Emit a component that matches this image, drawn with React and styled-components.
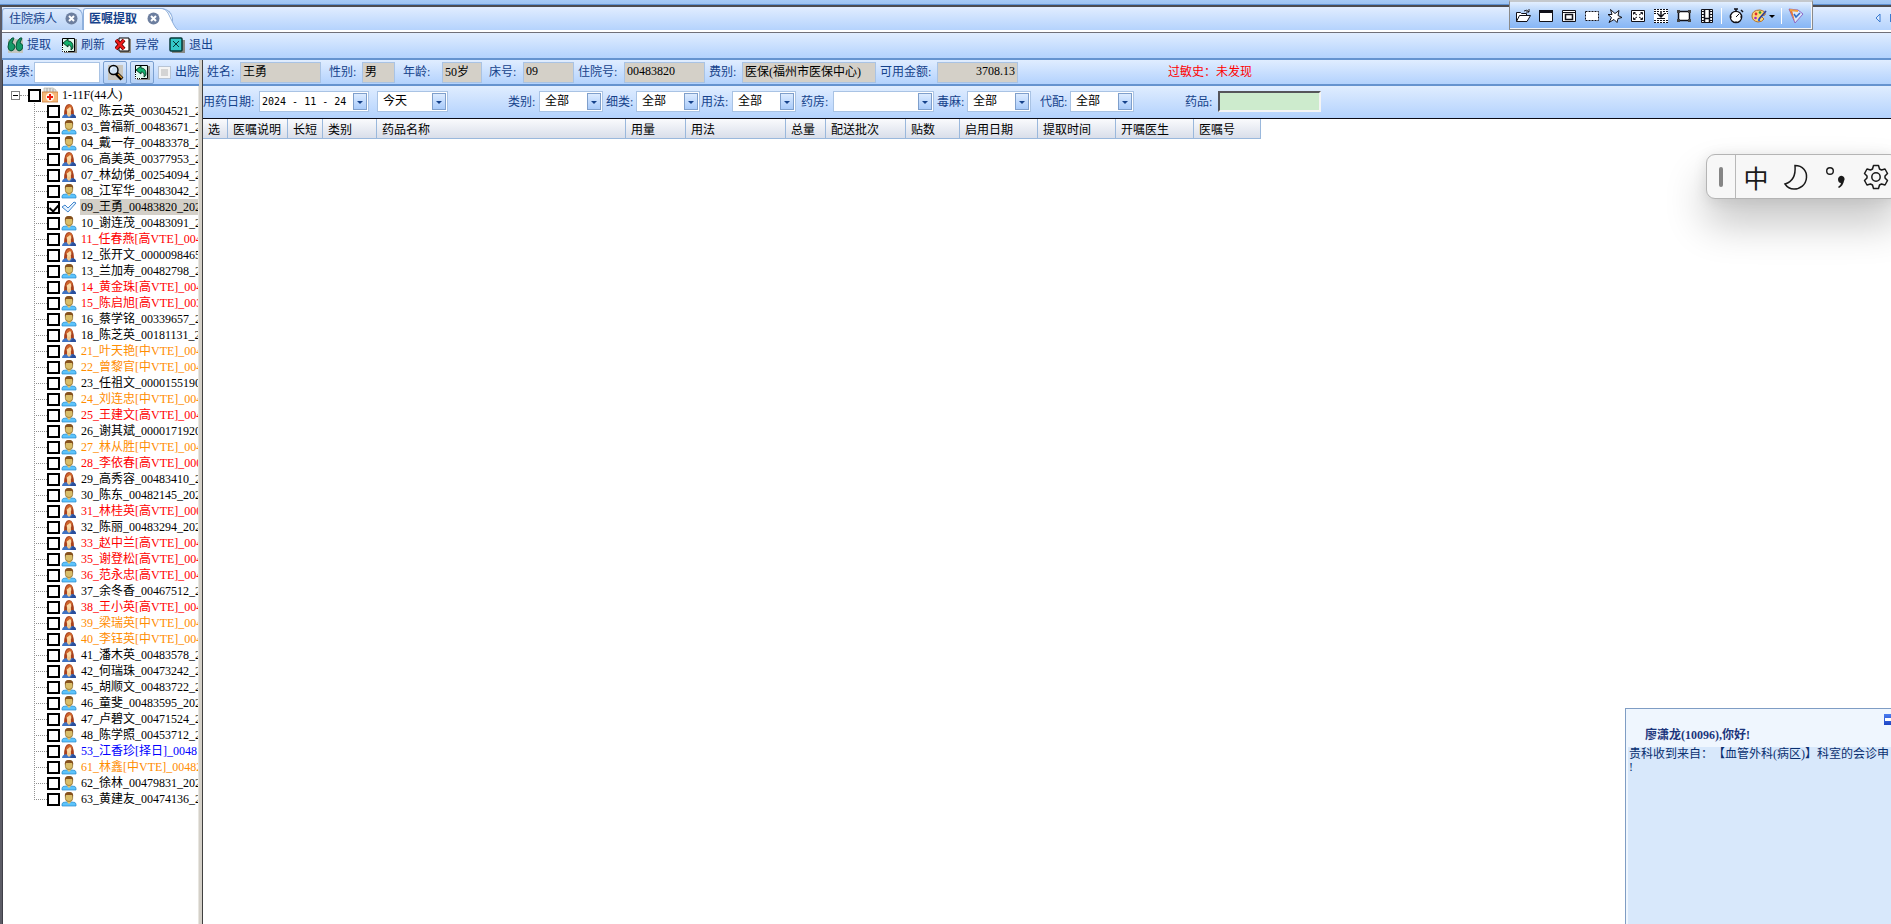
import React from "react";
import styled, { createGlobalStyle } from "styled-components";

const GlobalStyle = createGlobalStyle`
  * {
    box-sizing: border-box;
  }

  body {
    margin: 0;
    overflow: hidden;
    background: #ffffff;
    font-family: "Liberation Serif", "Noto Sans CJK SC", sans-serif;
    font-size: 12px;
    line-height: 16px;
    text-spacing-trim: space-all;
    color: #000000;
  }

  button, input, select {
    margin: 0;
    padding: 0;
    font: inherit;
    color: inherit;
  }
`;

const navy = "#15428b";
const edge = "#6593cf";
const soft = "#a9c3e4";
const barFill = "linear-gradient(#e0edff, #b3d2fd)";

const patients = [
  ["02_陈云英_00304521_2", "f"],
  ["03_曾福新_00483671_2", "m"],
  ["04_戴一存_00483378_2", "m"],
  ["06_高美英_00377953_2", "f"],
  ["07_林幼俤_00254094_2", "f"],
  ["08_江军华_00483042_2", "m"],
  ["09_王勇_00483820_202", "ok"],
  ["10_谢连茂_00483091_2", "m"],
  ["11_任春燕[高VTE]_004", "f", "high"],
  ["12_张开文_0000098465", "f"],
  ["13_兰加寿_00482798_2", "m"],
  ["14_黄金珠[高VTE]_004", "f", "high"],
  ["15_陈启旭[高VTE]_003", "m", "high"],
  ["16_蔡学铭_00339657_2", "m"],
  ["18_陈芝英_00181131_2", "f"],
  ["21_叶天艳[中VTE]_004", "f", "mid"],
  ["22_曾黎官[中VTE]_004", "m", "mid"],
  ["23_任祖文_0000155190", "m"],
  ["24_刘连忠[中VTE]_004", "m", "mid"],
  ["25_王建文[高VTE]_004", "m", "high"],
  ["26_谢其斌_0000171920", "m"],
  ["27_林从胜[中VTE]_004", "m", "mid"],
  ["28_李依春[高VTE]_000", "m", "high"],
  ["29_高秀容_00483410_2", "f"],
  ["30_陈东_00482145_202", "m"],
  ["31_林桂英[高VTE]_000", "f", "high"],
  ["32_陈丽_00483294_202", "f"],
  ["33_赵中兰[高VTE]_004", "f", "high"],
  ["35_谢登松[高VTE]_004", "m", "high"],
  ["36_范永忠[高VTE]_004", "m", "high"],
  ["37_余冬香_00467512_2", "f"],
  ["38_王小英[高VTE]_004", "f", "high"],
  ["39_梁瑞英[中VTE]_004", "f", "mid"],
  ["40_李钰英[中VTE]_004", "f", "mid"],
  ["41_潘木英_00483578_2", "f"],
  ["42_何瑞珠_00473242_2", "f"],
  ["45_胡顺文_00483722_2", "m"],
  ["46_童斐_00483595_202", "m"],
  ["47_卢碧文_00471524_2", "f"],
  ["48_陈学照_00453712_2", "m"],
  ["53_江香珍[择日]_0048", "f", "plan"],
  ["61_林鑫[中VTE]_00482", "m", "mid"],
  ["62_徐林_00479831_202", "m"],
  ["63_黄建友_00474136_2", "m"],
];

const levelColors = { high: "#ff0000", mid: "#ff8c00", plan: "#0000ff" };

const columns = [
  ["选", 25],
  ["医嘱说明", 60],
  ["长短", 35],
  ["类别", 54],
  ["药品名称", 249],
  ["用量", 60],
  ["用法", 100],
  ["总量", 40],
  ["配送批次", 80],
  ["贴数", 54],
  ["启用日期", 78],
  ["提取时间", 78],
  ["开嘱医生", 78],
  ["医嘱号", 67],
];

// label, value, label width, field width, gap before
const infoFields = [
  ["姓名:", "王勇", 33, 81, 4],
  ["性别:", "男", 33, 33, 8],
  ["年龄:", "50岁", 39, 40, 8],
  ["床号:", "09", 34, 51, 7],
  ["住院号:", "00483820", 46, 81, 4],
  ["费别:", "医保(福州市医保中心)", 33, 134, 4],
  ["可用金额:", "3708.13", 57, 81, 4],
];

const filters = [
  ["类别:", "全部", 31, 64, 60],
  ["细类:", "全部", 30, 64, 3],
  ["用法:", "全部", 31, 64, 1],
  ["药房:", "", 32, 101, 5],
  ["毒麻:", "全部", 30, 64, 3],
  ["代配:", "全部", 30, 64, 9],
];

/* ---------- shell ---------- */

const Shell = styled.div`
  display: flex;
  flex-direction: column;
  height: 100vh;
  overflow: hidden;
`;

const TopEdge = styled.div`
  flex: none;
  height: 7px;
  background: linear-gradient(#a5c9f5, #9cc2f0);
  border-bottom: 2px solid #4c4c50;
  box-shadow: inset 0 -1px 0 #5f92d2;
`;

const Frame = styled.div`
  flex: 1;
  min-height: 0;
  display: flex;
  flex-direction: column;
  border-left: 2px solid #5c5c66;
`;

const TabBar = styled.nav`
  flex: none;
  display: flex;
  align-items: flex-end;
  height: 25px;
  background: linear-gradient(#e1edff, #b5d3fd);
  border-bottom: 2px solid #ffffff;
`;

const Tab = styled.div`
  display: flex;
  align-items: center;
  height: 22px;
  width: ${(p) => (p.$active ? 90 : 81)}px;
  padding: 0 0 2px ${(p) => (p.$active ? 5 : 6)}px;
  color: ${navy};
  font-weight: ${(p) => (p.$active ? 700 : 400)};
  background: ${(p) => (p.$active ? "#ffffff" : "linear-gradient(#deebfd, #b9d3f6)")};
  border: 1px solid #8fb0dc;
  border-bottom: 0;
  border-radius: 3px ${(p) => (p.$active ? "12px 0" : "8px 0")} 0;
`;

const TabText = styled.button`
  flex: none;
  width: ${(p) => (p.$active ? 58 : 56)}px;
  border: 0;
  background: none;
  text-align: left;
  white-space: nowrap;
`;

const CloseButton = styled.button`
  display: flex;
  width: 13px;
  height: 13px;
  border: 0;
  background: none;
`;

const TabSlope = styled.svg`
  flex: none;
  width: 16px;
  height: 22px;
  margin-left: -11px;
`;

const TabArrow = styled.svg`
  width: 16px;
  height: 12px;
  margin: 0 0 6px auto;
`;

const Toolbar = styled.div`
  flex: none;
  display: flex;
  align-items: center;
  gap: 10px;
  height: 28px;
  padding: 0 0 2px 5px;
  background: ${barFill};
  border-top: 1px solid #707078;
  border-bottom: 2px solid ${edge};
`;

const ToolButton = styled.button`
  display: flex;
  align-items: center;
  gap: 4px;
  height: 20px;
  border: 0;
  background: none;
  color: ${navy};
`;

const Body = styled.div`
  flex: 1;
  min-height: 0;
  display: flex;
`;

/* ---------- patient tree ---------- */

const Side = styled.aside`
  flex: none;
  display: flex;
  flex-direction: column;
  width: 197px;
  overflow: hidden;
  border-left: 1px solid #3f3f48;
`;

const Splitter = styled.div`
  flex: none;
  width: 4px;
  background: #d4d0c8;
  border-right: 1px solid #404040;
`;

const SearchRow = styled.form`
  flex: none;
  display: flex;
  align-items: center;
  height: 26px;
  padding-left: 3px;
  white-space: nowrap;
  color: ${navy};
  background: ${barFill};
  border-bottom: 2px solid ${edge};
`;

const SearchLabel = styled.label`
  flex: none;
  width: 28px;
`;

const SearchInput = styled.input`
  flex: none;
  width: 66px;
  height: 21px;
  margin-right: 3px;
  padding: 0 3px;
  border: 1px solid ${soft};
  background: #ffffff;
`;

const IconButton = styled.button`
  flex: none;
  display: flex;
  align-items: center;
  justify-content: center;
  width: 24px;
  height: 23px;
  margin-right: 3px;
  border: 1px solid #7a9fd0;
  border-radius: 2px;
  background: linear-gradient(#d9e8fc, #b4d0f5);
`;

const OutCheck = styled.input`
  flex: none;
  appearance: none;
  width: 13px;
  height: 13px;
  margin: 0 4px 0 1px;
  border: 1px solid #b8c4d4;
  background: #d4d4d4;
  box-shadow: inset 0 0 0 2px #f4f4f4;
`;

const Tree = styled.ul`
  flex: 1;
  min-height: 0;
  margin: 0;
  padding: 1px 0 0;
  list-style: none;
  overflow: hidden;
  background: #ffffff;
  border-right: 1px solid #e8e6e0;
`;

const RootRow = styled.div`
  display: flex;
  align-items: center;
  height: 16px;
  padding-left: 8px;
`;

const Expander = styled.button`
  display: flex;
  align-items: center;
  justify-content: center;
  width: 9px;
  height: 9px;
  border: 1px solid #808080;
  background: #ffffff;

  &::before {
    content: "";
    width: 5px;
    height: 1px;
    background: #000000;
  }
`;

const Dots = styled.span`
  flex: none;
  width: ${(p) => p.$width}px;
  border-top: 1px dotted #909090;
`;

const Branch = styled.ul`
  margin: 0;
  padding: 0 0 0 31px;
  list-style: none;
`;

const Row = styled.li`
  display: flex;
  align-items: center;
  height: 16px;
  background: linear-gradient(#909090 50%, transparent 50%) 0 0 / 1px 2px repeat-y;

  &:last-child {
    background-repeat: no-repeat;
    background-image: repeating-linear-gradient(#909090 0 1px, transparent 1px 2px);
    background-size: 1px 8px;
  }
`;

const RowLabel = styled.label`
  display: flex;
  flex: 1;
  align-items: center;
  min-width: 0;
`;

const TreeCheck = styled.input`
  flex: none;
  appearance: none;
  display: grid;
  place-items: center;
  width: 13px;
  height: 13px;
  border: 2px solid #000000;
  background: #ffffff;

  &:checked::before {
    content: "";
    width: 4px;
    height: 7px;
    margin-bottom: 2px;
    border: solid #000000;
    border-width: 0 2px 2px 0;
    transform: rotate(42deg);
  }
`;

const PatientIcon = styled.svg`
  flex: none;
  width: 16px;
  height: 16px;
  margin: 0 3px 0 1px;
`;

const Name = styled.span`
  flex: 1;
  padding-left: 1px;
  height: 16px;
  white-space: nowrap;
  overflow: hidden;
  color: ${(p) => levelColors[p.$level] || "#000000"};
  background: ${(p) => (p.$selected ? "#d4d0c8" : "transparent")};
`;

/* ---------- right side ---------- */

const Main = styled.main`
  flex: 1;
  min-width: 0;
  background: #ffffff;
`;

const InfoBar = styled.div`
  display: flex;
  align-items: center;
  height: 26px;
  color: ${navy};
  background: ${barFill};
  border-bottom: 2px solid ${edge};
`;

const FilterBar = styled(InfoBar)`
  height: 33px;
  padding-bottom: 1px;
  border-bottom: 1px solid #0a0a14;
`;

const Pair = styled.div`
  flex: none;
  display: flex;
  align-items: center;
  margin-left: ${(p) => p.$gap}px;
`;

const PairLabel = styled.label`
  flex: none;
  width: ${(p) => p.$width}px;
  white-space: nowrap;
`;

const ReadField = styled.input`
  width: ${(p) => p.$width}px;
  height: 21px;
  padding: 0 2px 2px;
  text-align: ${(p) => (p.$right ? "right" : "left")};
  color: #000000;
  border: 1px solid ${soft};
  background: #d4d0c8;
`;

const Allergy = styled.span`
  margin-left: 150px;
  color: #ff0000;
`;

const Combo = styled.div`
  display: flex;
  align-items: center;
  width: ${(p) => p.$width}px;
  height: 21px;
  padding: 1px;
  color: #000000;
  border: 1px solid ${soft};
  background: #ffffff;
`;

const Select = styled.select`
  appearance: none;
  flex: 1;
  min-width: 0;
  height: 17px;
  padding: 0 0 1px 4px;
  border: 0;
  background: none;
`;

const DateInput = styled.input`
  flex: 1;
  min-width: 0;
  height: 17px;
  padding: 0 0 1px 1px;
  border: 0;
  background: none;
  font-family: "DejaVu Sans Mono", monospace;
  font-size: 10px;
`;

const Arrow = styled.span`
  flex: none;
  display: flex;
  align-items: center;
  justify-content: center;
  width: 14px;
  height: 17px;
  border: 1px solid #7f9fcb;
  background: linear-gradient(#dcebff, #a9cbfa);
  pointer-events: none;

  &::before {
    content: "";
    margin-top: 2px;
    border: solid transparent;
    border-width: 3px 3px 0;
    border-top-color: ${navy};
  }
`;

const DrugInput = styled.input`
  width: 103px;
  height: 21px;
  padding: 0 3px;
  border: 2px solid #ffffff;
  border-color: #55555a #f4f4f4 #f4f4f4 #55555a;
  background: #cdebcd;
`;

const Table = styled.table`
  table-layout: fixed;
  width: 1058px;
  border-collapse: separate;
  border-spacing: 0;
`;

const Th = styled.th`
  height: 20px;
  padding: 2px 0 0 5px;
  text-align: left;
  font-weight: 400;
  white-space: nowrap;
  background: linear-gradient(#fafbfd, #d9deea);
  border-right: 1px solid #9ab8dc;
  border-bottom: 1px solid #9ab8dc;
`;

/* ---------- floating windows ---------- */

const CaptureBar = styled.div`
  position: absolute;
  top: 0;
  right: 78px;
  display: flex;
  align-items: center;
  gap: 7px;
  height: 30px;
  padding: 0 8px 0 5px;
  border: 1px solid #8a8a8a;
  border-top: 2px solid #c4c8cc;
  background: linear-gradient(#e3efff, #a6caf8 50%, #84b4f5);
  box-shadow: inset 0 -1px 0 #f5f5f5, inset -1px 0 0 #f5f5f5;
`;

const CaptureButton = styled.button`
  display: flex;
  align-items: center;
  width: ${(p) => (p.$wide ? 24 : 16)}px;
  height: 16px;
  border: 0;
  background: none;
`;

const Divider = styled.span`
  width: 1px;
  height: 16px;
  margin: 0 -1px;
  background: #ffffff;
`;

const ImeBar = styled.div`
  position: absolute;
  top: 154px;
  right: -8px;
  display: flex;
  align-items: center;
  width: 193px;
  height: 45px;
  border: 1px solid #b4b4b4;
  border-radius: 9px;
  background: #f7f7f7;
  box-shadow: 0 24px 42px rgba(0, 0, 0, 0.24), 0 2px 14px rgba(0, 0, 0, 0.1);
`;

const Grip = styled.span`
  display: flex;
  align-items: center;
  justify-content: center;
  width: 29px;
  height: 43px;
  border-right: 1px solid #b8b8b8;

  &::before {
    content: "";
    width: 4px;
    height: 20px;
    border-radius: 2px;
    background: #858585;
  }
`;

const ImeButton = styled.button`
  display: flex;
  align-items: center;
  justify-content: center;
  width: 40px;
  height: 43px;
  border: 0;
  background: none;
  font-family: "Noto Sans CJK SC", sans-serif;
  font-size: 25px;
  line-height: 40px;
  color: #1a1a1a;
`;

const Notice = styled.section`
  position: absolute;
  right: 0;
  bottom: 0;
  width: 266px;
  height: 216px;
  overflow: hidden;
  color: #0a3070;
  border: solid #7f9dc4;
  border-width: 1px 0 0 1px;
  background: #eff6fe;
`;

const NoticeTop = styled.div`
  display: flex;
  align-items: flex-start;
  justify-content: space-between;
  height: 38px;
  padding: 5px 0 0 19px;
`;

const NoticeTitle = styled.strong`
  padding-top: 13px;
  color: #1c357c;
`;

const Minimize = styled.button`
  display: flex;
  align-items: center;
  justify-content: flex-end;
  width: 7px;
  height: 11px;
  border: 0;
  background: linear-gradient(#4a7cf0, #1c45c4);

  &::before {
    content: "";
    width: 6px;
    height: 3px;
    background: #ffffff;
  }
`;

const NoticeBody = styled.div`
  height: 178px;
  margin-left: 2px;
  background: #d8e8fb;
`;

const NoticeLine = styled.p`
  margin: 0;
  padding-left: 1px;
  line-height: 13px;
  white-space: nowrap;

  &:first-child {
    padding-top: 1px;
  }
`;

/* ---------- drawings ---------- */

const CloseIcon = () => (
  <svg width="13" height="13" viewBox="0 0 13 13">
    <circle cx="6.5" cy="6.5" r="6" fill="#6d7f9f" />
    <path d="M4 4l5 5M9 4l-5 5" stroke="#fff" strokeWidth="2" />
  </svg>
);

const FemaleIcon = () => (
  <PatientIcon viewBox="0 0 16 16">
    <path d="M3 13Q3 1 8 1t5 12z" fill="#a8401c" />
    <path d="M1 15q0-3 4-4l3 2 3-2q4 1 4 4z" fill="#3f74c4" />
    <path d="M9 15l3-4q3 1 3 4z" fill="#2a4f9c" />
    <path d="M6 9h4v3l-2 2-2-2z" fill="#f3c88e" />
    <ellipse cx="8" cy="6.500" rx="2.300" ry="3.200" fill="#fad9a5" />
    <path d="M4.500 7q1-5 4-5 3 0 3 4L9 4q-2 2-4.500 3z" fill="#d0662c" />
  </PatientIcon>
);

const MaleIcon = () => (
  <PatientIcon viewBox="0 0 16 16">
    <path d="M1 15v-2q0-2 4-2h6q4 0 4 2v2z" fill="#5cc3fb" stroke="#2588cc" strokeWidth=".7" />
    <path d="M6 9h4v2l-2 2-2-2z" fill="#e4c46c" />
    <rect x="4.400" y="1.600" width="7.200" height="8.800" rx="3" fill="#d9bd68" stroke="#8d6d2c" strokeWidth=".8" />
    <path d="M4 6Q3 1 8 1t4 5l-1-2H5z" fill="#85501d" />
  </PatientIcon>
);

const CheckedIcon = () => (
  <PatientIcon viewBox="0 0 16 16">
    <path d="M1 8l3-2 3 3 6-6 2 1-8 9z" fill="#e4f2ff" stroke="#3f85cc" />
  </PatientIcon>
);

const WardIcon = () => (
  <PatientIcon viewBox="0 0 16 16">
    <path d="M2 5V1h9l3 2v3z" fill="#e4e4e0" stroke="#aaa79d" strokeWidth=".6" />
    <path d="M5 1v4M8 1v4M11 2v3" stroke="#999" strokeWidth=".8" />
    <path d="M0 5h16v10H0z" fill="#f6b878" stroke="#c97c3a" strokeWidth=".8" />
    <circle cx="8" cy="10" r="4.200" fill="#fff4e6" />
    <path d="M8 7v6M5 10h6" stroke="#e82010" strokeWidth="2" />
  </PatientIcon>
);

const icons = { f: FemaleIcon, m: MaleIcon, ok: CheckedIcon };

const QuoteIcon = () => (
  <svg width="16" height="16" viewBox="0 0 16 16">
    <path d="M1 2h15v14H1z" fill="#c6c6c0" />
    <path d="M1 10Q1 4 5 1h2L5 6q3 1 3 4-1 4-4 4-3-1-3-4zM9 10q0-6 4-9h2l-2 5q3 1 3 4-1 4-4 4-3-1-3-4z" fill="#149a68" stroke="#075539" />
  </svg>
);

const RefreshIcon = () => (
  <svg width="16" height="16" viewBox="0 0 16 16">
    <path d="M3 2h13v14H3z" fill="#8c8c86" />
    <path d="M1.500 1.500h12v13h-12z" fill="#dff8ee" stroke="#000" />
    <path d="M2 6l5-4v2q5 0 5 6 0 2-2 3 1-5-3-5v2z" fill="#12b26c" stroke="#00331c" strokeWidth=".9" />
    <path d="M1.500 9v5.500h6" fill="none" stroke="#fff" strokeDasharray="1 1" />
  </svg>
);

const ErrorIcon = () => (
  <svg width="16" height="16" viewBox="0 0 16 16">
    <path d="M5 2h11v14H5z" fill="#8c8880" />
    <path d="M4 1h10v13H4z" fill="#fff" stroke="#000" />
    <path d="M1 3l8 9M9 3l-8 9" stroke="#5a0000" strokeWidth="4" />
    <path d="M1 3l8 9M9 3l-8 9" stroke="#f01c1c" strokeWidth="2.400" />
  </svg>
);

const ExitIcon = () => (
  <svg width="16" height="16" viewBox="0 0 16 16">
    <path d="M3 3h13v13H3z" fill="#8a8a84" />
    <rect x="1" y="1" width="12" height="13" rx="1" fill="#35c8c8" stroke="#063838" strokeWidth="1.500" />
    <path d="M4 4l6 6M10 4l-6 6" stroke="#063838" />
  </svg>
);

const SearchIcon = () => (
  <svg width="17" height="17" viewBox="0 0 17 17">
    <path d="M1 1h15v15H1z" fill="#c9c6bd" />
    <path d="M9 9l6 6" stroke="#000" strokeWidth="4" />
    <path d="M11 10l4 4" stroke="#d89838" strokeWidth="1.500" />
    <circle cx="6.500" cy="6" r="4.500" fill="#cfe2f4" stroke="#000" strokeWidth="1.400" />
    <path d="M4 6q0-2 2-3" stroke="#fff" fill="none" />
  </svg>
);

const line = { fill: "#fff", stroke: "#101018", strokeWidth: 1 };

const captureIcons = [
  <g key="open" {...line}>
    <path d="M1.500 13.500v-9h4l1 1h5v2" />
    <path d="M1.500 13.500l3-6h11l-3.500 6zM9 3q3-2 5 1m0-3v3h-3" />
  </g>,
  <g key="window" {...line}>
    <path d="M1.500 2.500h13v11h-13z" />
    <path d="M1 2h14v3H1z" fill="#101018" stroke="none" />
  </g>,
  <g key="object" {...line}>
    <path d="M1.500 2.500h13v11h-13zM1 4.500h14" />
    <path d="M4.500 6.500h7v5h-7z" strokeWidth="1.500" />
  </g>,
  <g key="region" {...line}>
    <path d="M1.500 3.500h13v9h-13z" strokeDasharray="2 1" />
  </g>,
  <g key="free" {...line}>
    <path d="M3.500 1.500l4.500 4 4-3-1 5 4 2-4 1-1 4-3-3-5 3 2.500-5-3.500-3h4z" />
  </g>,
  <g key="full" {...line}>
    <path d="M1.500 2.500h13v11h-13z" />
    <path d="M4 5l3 2M12 5L9 7M4 11l3-2M12 11L9 9" />
    <path d="M3.500 6.500v-2h2M10.500 4.500h2v2M3.500 9.500v2h2M10.500 11.500h2v-2" fill="none" />
  </g>,
  <g key="scroll" {...line}>
    <path d="M1.500 1.500h13v13h-13z" stroke="#fff" />
    <path d="M1 1.500h14M1 3.500h5M10 3.500h5M1 5.500h4M11 5.500h4M1 12.500h14M1 14.500h14" strokeDasharray="2 1" />
    <path d="M4 10.500h8" />
    <path d="M8 3v6M5 6l3 3 3-3" strokeWidth="1.500" fill="none" />
  </g>,
  <g key="fixed" {...line}>
    <path d="M2.500 3.500h11v9h-11z" strokeWidth="1.500" />
    <path d="M1 2h3v3H1zM12 2h3v3h-3zM1 11h3v3H1zM12 11h3v3h-3z" fill="#444" stroke="none" />
  </g>,
  <g key="video" {...line}>
    <path d="M2.500 1.500h11v13h-11z" />
    <path d="M5.500 1v14M10.500 1v14M5 10.500h6" strokeWidth="1.500" />
    <path d="M3 3.500h2M3 6.500h2M3 9.500h2M3 12.500h2M11 3.500h2M11 6.500h2M11 9.500h2M11 12.500h2" />
  </g>,
];

const TimerIcon = () => (
  <svg width="16" height="16" viewBox="0 0 16 16">
    <path d="M6 1h4M8 1v3M13 2l2 2" stroke="#101018" strokeWidth="1.500" />
    <circle cx="8" cy="9" r="5.700" fill="#fff" stroke="#101018" strokeWidth="1.300" />
    <path d="M8 9l3-3M3 9h1M12 9h1M8 13v1" stroke="#101018" />
  </svg>
);

const PaletteIcon = () => (
  <svg width="24" height="16" viewBox="0 0 24 16">
    <path d="M1 8q0-6 8-6 6 1 5 5l-4 1 3 3q-2 3-6 3-6-1-6-6z" fill="#fbd878" stroke="#b4702c" />
    <circle cx="5" cy="6" r="1.400" fill="#e02c2c" />
    <circle cx="9" cy="4.500" r="1.300" fill="#2c9a30" />
    <circle cx="4.500" cy="10" r="1.300" fill="#a424c8" />
    <circle cx="8" cy="12" r="1.200" fill="#2860e0" />
    <path d="M8 11l7-8" stroke="#30409a" strokeWidth="1.800" />
    <path d="M18 7h6l-3 3z" fill="#000" />
  </svg>
);

const MarkIcon = () => (
  <svg width="16" height="16" viewBox="0 0 16 16">
    <path d="M1 1l9 1 5 4-8 9z" fill="#dce8fa" stroke="#8c68c8" />
    <path d="M1 1l3 1 3 12z" fill="#e87830" />
    <path d="M2 2l8 1" stroke="#f0a040" strokeWidth="2" />
    <path d="M6 6l2 3 4-4" fill="none" stroke="#2c6cc8" strokeWidth="1.500" />
  </svg>
);

const MoonIcon = () => (
  <svg width="26" height="26" viewBox="0 0 26 26" fill="none" stroke="#1a1a1a" strokeWidth="1.500">
    <path d="M12 1.500c8 0 12 6 11.500 12C23 21 17 25 11 25c-4 0-7-2-9-5 7-2 11-7 10-18.500z" />
  </svg>
);

const PunctIcon = () => (
  <svg width="22" height="24" viewBox="0 0 22 24">
    <circle cx="5" cy="6" r="3.300" fill="none" stroke="#1a1a1a" strokeWidth="1.400" />
    <path d="M13 14a3.300 3.300 0 1 1 6 2q-1 5-5 7l-1-1q3-2 3-4-3 0-3-4z" fill="#1a1a1a" />
  </svg>
);

const GearIcon = () => (
  <svg width="26" height="26" viewBox="0 0 26 26" fill="none" stroke="#1a1a1a" strokeWidth="1.500" strokeLinejoin="round">
    <path d="M10.500 1.500h5l1 3.500 2 1 3.500-1 2.500 4.500-2.500 2.500v2l2.500 2.500-2.500 4.500-3.500-1-2 1-1 3.500h-5l-1-3.500-2-1-3.500 1L1.500 16.500 4 14v-2L1.500 9.500 4 5l3.500 1 2-1z" />
    <circle cx="13" cy="13" r="4.200" />
  </svg>
);

/* ---------- page ---------- */

const tools = [
  ["提取", QuoteIcon],
  ["刷新", RefreshIcon],
  ["异常", ErrorIcon],
  ["退出", ExitIcon],
];

const PatientTree = () => (
  <Tree>
    <li>
      <RootRow>
        <Expander aria-label="收起" />
        <Dots $width={8} />
        <RowLabel>
          <TreeCheck type="checkbox" />
          <WardIcon />
          <Name>1-11F(44人)</Name>
        </RowLabel>
      </RootRow>
      <Branch>
        {patients.map(([name, kind, level]) => {
          const Icon = icons[kind];
          return (
            <Row key={name}>
              <Dots $width={13} />
              <RowLabel>
                <TreeCheck type="checkbox" defaultChecked={kind === "ok"} />
                <Icon />
                <Name $level={level} $selected={kind === "ok"}>
                  {name}
                </Name>
              </RowLabel>
            </Row>
          );
        })}
      </Branch>
    </li>
  </Tree>
);

const App = () => {
  return (
    <Shell>
      <GlobalStyle />
      <TopEdge />
      <Frame>
        <TabBar>
          <Tab>
            <TabText>住院病人</TabText>
            <CloseButton aria-label="关闭"><CloseIcon /></CloseButton>
          </Tab>
          <Tab $active>
            <TabText $active>医嘱提取</TabText>
            <CloseButton aria-label="关闭"><CloseIcon /></CloseButton>
          </Tab>
          <TabSlope viewBox="0 0 16 22">
            <path d="M0 1Q4 1 6 5l6 12q2 4 4 5H0z" fill="#fff" />
            <path d="M0 .5Q4 1 6 5l6 12q2 4 4 5" fill="none" stroke="#8fb0dc" />
          </TabSlope>
          <TabArrow viewBox="0 0 16 12">
            <path d="M5 2v8L1 6z" fill="#dceaff" stroke="#3a7bd0" />
            <path d="M15.500 2v8" stroke="#3a7bd0" />
          </TabArrow>
        </TabBar>
        <Toolbar>
          {tools.map(([text, Icon]) => (
            <ToolButton key={text}>
              <Icon />
              {text}
            </ToolButton>
          ))}
        </Toolbar>
        <Body>
          <Side>
            <SearchRow onSubmit={(e) => e.preventDefault()}>
              <SearchLabel htmlFor="search">搜索:</SearchLabel>
              <SearchInput id="search" />
              <IconButton aria-label="查找"><SearchIcon /></IconButton>
              <IconButton type="button" aria-label="刷新列表"><RefreshIcon /></IconButton>
              <OutCheck id="out" type="checkbox" />
              <label htmlFor="out">出院</label>
            </SearchRow>
            <PatientTree />
          </Side>
          <Splitter />
          <Main>
            <InfoBar>
              {infoFields.map(([label, value, labelWidth, width, gap], i) => (
                <Pair key={label} $gap={gap}>
                  <PairLabel htmlFor={`info-${i}`} $width={labelWidth}>{label}</PairLabel>
                  <ReadField
                    id={`info-${i}`}
                    readOnly
                    value={value}
                    $width={width}
                    $right={label === "可用金额:"}
                  />
                </Pair>
              ))}
              <Allergy>过敏史：未发现</Allergy>
            </InfoBar>
            <FilterBar>
              <Pair $gap={0}>
                <PairLabel htmlFor="date" $width={56}>用药日期:</PairLabel>
                <Combo $width={110}>
                  <DateInput id="date" defaultValue="2024 - 11 - 24" />
                  <Arrow />
                </Combo>
              </Pair>
              <Pair $gap={8}>
                <Combo $width={71}>
                  <Select aria-label="日期范围">
                    <option>今天</option>
                  </Select>
                  <Arrow />
                </Combo>
              </Pair>
              {filters.map(([label, value, labelWidth, width, gap], i) => (
                <Pair key={label} $gap={gap}>
                  <PairLabel htmlFor={`filter-${i}`} $width={labelWidth}>{label}</PairLabel>
                  <Combo $width={width}>
                    <Select id={`filter-${i}`}>
                      <option>{value}</option>
                    </Select>
                    <Arrow />
                  </Combo>
                </Pair>
              ))}
              <Pair $gap={51}>
                <PairLabel htmlFor="drug" $width={33}>药品:</PairLabel>
                <DrugInput id="drug" />
              </Pair>
            </FilterBar>
            <Table>
              <colgroup>
                {columns.map(([name, width]) => (
                  <col key={name} width={width} />
                ))}
              </colgroup>
              <thead>
                <tr>
                  {columns.map(([name]) => (
                    <Th key={name}>{name}</Th>
                  ))}
                </tr>
              </thead>
            </Table>
          </Main>
        </Body>
      </Frame>

      <CaptureBar>
        {captureIcons.map((icon) => (
          <CaptureButton key={icon.key} aria-label={icon.key}>
            <svg width="16" height="16" viewBox="0 0 16 16">{icon}</svg>
          </CaptureButton>
        ))}
        <Divider />
        <CaptureButton aria-label="timer"><TimerIcon /></CaptureButton>
        <CaptureButton $wide aria-label="palette"><PaletteIcon /></CaptureButton>
        <Divider />
        <CaptureButton aria-label="mark"><MarkIcon /></CaptureButton>
      </CaptureBar>

      <ImeBar>
        <Grip />
        <ImeButton>中</ImeButton>
        <ImeButton aria-label="半角"><MoonIcon /></ImeButton>
        <ImeButton aria-label="标点"><PunctIcon /></ImeButton>
        <ImeButton aria-label="设置"><GearIcon /></ImeButton>
      </ImeBar>

      <Notice>
        <NoticeTop>
          <NoticeTitle>廖潇龙(10096),你好!</NoticeTitle>
          <Minimize aria-label="最小化" />
        </NoticeTop>
        <NoticeBody>
          <NoticeLine>贵科收到来自：【血管外科(病区)】科室的会诊申</NoticeLine>
          <NoticeLine>!</NoticeLine>
        </NoticeBody>
      </Notice>
    </Shell>
  );
};

export default App;
